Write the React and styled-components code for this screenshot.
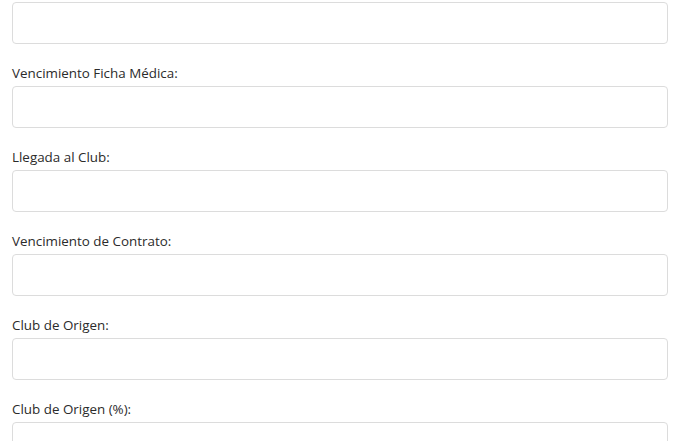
import React from "react";
import styled, { createGlobalStyle } from "styled-components";

const Global = createGlobalStyle`
  html, body { margin: 0; padding: 0; background: #fff; }
  body { font-family: "Open Sans", sans-serif; color: #2b2b2b; }
`;

const Form = styled.div`
  padding: 2px 32px 0 12px;
  width: 656px;
  display: flex;
  flex-direction: column;
`;

const Field = styled.div`
  display: flex;
  flex-direction: column;
`;

const Label = styled.label`
  font-size: 13.4px;
  line-height: 20px;
  margin: 19px 0 3px;
  color: #2b2b2b;
`;

const Input = styled.input`
  box-sizing: border-box;
  height: 42px;
  width: 100%;
  border: 1px solid #dcdcdc;
  border-radius: 4px;
  background: #fff;
  padding: 6px 12px;
  font-family: inherit;
  font-size: 13px;
  outline: none;
`;

const labels = [
  "Vencimiento Ficha Médica:",
  "Llegada al Club:",
  "Vencimiento de Contrato:",
  "Club de Origen:",
  "Club de Origen (%):",
];

export default function App() {
  return (
    <>
      <Global />
      <Form>
        <Input type="text" />
        {labels.map((l) => (
          <Field key={l}>
            <Label>{l}</Label>
            <Input type="text" />
          </Field>
        ))}
      </Form>
    </>
  );
}
